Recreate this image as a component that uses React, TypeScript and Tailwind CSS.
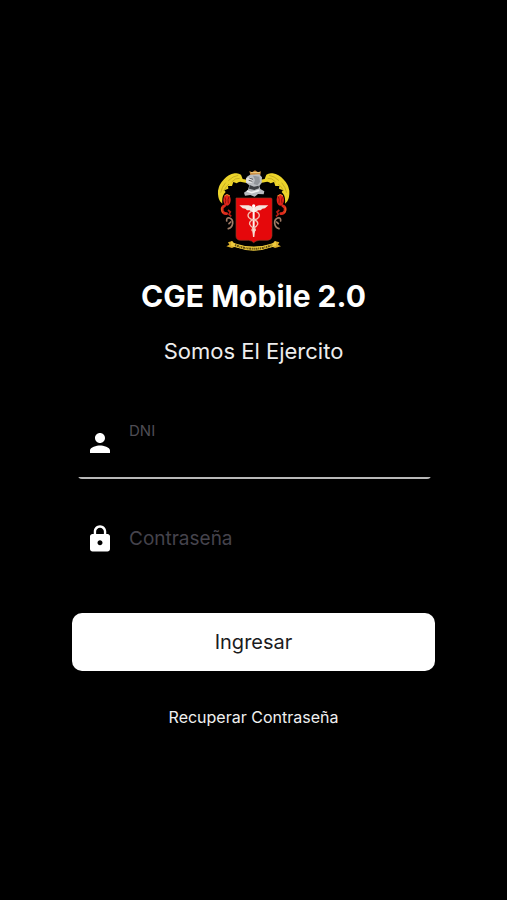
import { useState } from 'react';
import type { ReactNode } from 'react';
import clsx from 'clsx';
import { MdLock, MdPerson } from 'react-icons/md';

interface FieldProps {
  id: string;
  label: string;
  type: string;
  icon: ReactNode;
  value: string;
  active: boolean;
  onChange: (value: string) => void;
  onFocus: () => void;
}

function Field({ id, label, type, icon, value, active, onChange, onFocus }: FieldProps) {
  const floated = active || value !== '';

  return (
    <div className="mr-1 ml-1.5 overflow-hidden rounded-b-sm">
      <div
        className={clsx(
          'relative flex h-[70px] items-center border-b-2 pl-[7px]',
          active ? 'border-[#b8b8b8]' : 'border-transparent'
        )}
      >
        <span className="text-[30px] text-white">{icon}</span>
        <label
          htmlFor={id}
          className={clsx(
            'pointer-events-none absolute left-[51px]',
            floated
              ? 'top-3 text-[15px] leading-5 text-[#4f4d54]'
              : 'inset-y-0 flex items-center text-[19px] text-[#45434c]'
          )}
        >
          {label}
        </label>
        <input
          id={id}
          type={type}
          value={value}
          onChange={(e) => onChange(e.target.value)}
          onFocus={onFocus}
          className="ml-3.5 h-full w-full min-w-0 bg-transparent pt-5 text-xl text-white outline-none"
        />
      </div>
    </div>
  );
}

function Scroll() {
  return (
    <>
      {/* plume */}
      <path
        d="M118 60 L101 57 L96 44 Q88 38 77 40 Q58 43 45 58 Q30 73 27 92 Q26 112 33 124 L40 131 Q38 112 45 102 L50 96 L46 91 L58 86 L57 78 L69 78 L73 66 L83 70 Q90 63 98 66 L113 69 Z"
        fill="#ecd42b"
      />
      <path
        d="M88 46 Q72 48 58 62 M50 68 Q38 82 35 98 M92 55 Q79 53 68 66 M60 72 Q50 80 44 93"
        fill="none"
        stroke="#b59c1c"
        strokeWidth="2"
      />
      {/* ribbon */}
      <ellipse cx="54" cy="120" rx="11" ry="17" fill="#e3241a" />
      <path
        d="M48 112 Q52 120 49 130 M60 110 Q55 118 58 130"
        fill="none"
        stroke="#8b120c"
        strokeWidth="3"
      />
      <path d="M46 108 Q53 99 63 108" fill="none" stroke="#e8932c" strokeWidth="3" />
      <path
        d="M47 137 Q37 141 40 152 Q43 162 53 161"
        fill="none"
        stroke="#dd2a1c"
        strokeWidth="8"
        strokeLinecap="round"
      />
      <path d="M39 142 Q35 150 41 159" fill="none" stroke="#e07a25" strokeWidth="2" />
      <path d="M57 150 L64 156 L60 163 L67 169" fill="none" stroke="#b51d14" strokeWidth="5" />
      <path
        d="M53 183 Q52 171 62 174 Q72 178 71 190 Q69 203 58 206 M65 186 L60 191"
        fill="none"
        stroke="#a07b66"
        strokeWidth="5"
        strokeLinecap="round"
      />
    </>
  );
}

function Crest() {
  return (
    <svg viewBox="0 0 270 300" className="h-[100px] w-[90px]" role="img" aria-label="CGE">
      <Scroll />
      <g transform="translate(268 0) scale(-1 1)">
        <Scroll />
      </g>

      {/* helmet */}
      <path d="M121 33 L129 37 L138 31 L147 37 L156 34 L154 45 L124 45 Z" fill="#c8883a" />
      <path d="M125 38 H153" stroke="#f0d28a" strokeWidth="3" />
      <path
        d="M113 51 L123 44 L151 43 L159 52 L158 69 L151 78 L154 87 L166 94 L164 103 L147 102 L137 110 L124 105 L108 107 L105 98 L117 89 L121 76 L111 68 Z"
        fill="#b9bcc0"
      />
      <path d="M111 55 L124 51 L131 61 L128 69 L112 68 Z" fill="#e3e3e3" />
      <path d="M121 54 L132 58 M119 61 L130 64" stroke="#55575c" strokeWidth="3" />
      <path d="M132 47 L151 50 L153 66 L145 76 L134 72 L138 60 Z" fill="#92969b" />
      <path d="M122 75 L135 80 L149 77 L150 85 L136 90 L120 86 Z" fill="#3c3f43" />
      <path d="M114 93 L128 98 L151 91" fill="none" stroke="#f4f4f4" strokeWidth="5" />

      {/* shield */}
      <path
        d="M81 114 H186 Q189 114 189 118 V228 Q188 240 176 241 H150 Q140 242 134 248 Q129 242 119 241 H94 Q81 240 81 228 Z"
        fill="#e5080b"
        stroke="#8d3b21"
        strokeWidth="2"
      />

      {/* caduceus */}
      <path
        d="M91 136 H119 Q127 137 132 143 L136 143 Q142 137 150 136 H178 L168 145 L160 146 L155 151 L147 151 L141 156 H128 L122 151 L114 151 L109 146 L101 145 Z"
        fill="#f5e6df"
      />
      <circle cx="134" cy="138" r="5" fill="#fff" />
      <path d="M134 140 V217" stroke="#fff4ef" strokeWidth="6" />
      <path d="M129 202 H139 L136 231 H132 Z" fill="#f7ded4" />
      <path
        d="M126 155 Q113 162 119 172 Q124 179 134 179 Q148 183 146 193 Q143 200 134 204 Q127 207 130 213"
        fill="none"
        stroke="#f3c3b4"
        strokeWidth="4"
      />
      <path
        d="M142 155 Q155 162 149 172 Q144 179 134 179 Q120 183 122 193 Q125 200 134 204 Q141 207 138 213"
        fill="none"
        stroke="#f3c3b4"
        strokeWidth="4"
      />

      {/* motto band */}
      <path
        d="M70 243 L57 247 L61 254 L52 259 L69 264 Q77 259 86 263 Q134 277 181 263 Q191 259 198 264 L216 259 L207 254 L211 247 L197 243 Q192 253 178 256 Q134 265 90 256 Q75 253 70 243 Z"
        fill="#d9ae2c"
      />
      <path
        d="M67 243 Q71 249 82 251 Q134 269 186 251 Q196 249 200 243 L202 257 Q193 260 182 263 Q134 281 86 263 Q74 260 66 257 Z"
        fill="#edcb3e"
      />
      <path
        d="M78 255 Q134 278 190 255"
        fill="none"
        stroke="#65500f"
        strokeWidth="6"
        strokeDasharray="4 2 6 2 3 2"
      />
    </svg>
  );
}

export default function App() {
  const [dni, setDni] = useState('');
  const [password, setPassword] = useState('');
  const [active, setActive] = useState('dni');

  return (
    <div className="flex min-h-screen flex-col justify-center bg-black px-[72px] pb-[11px] font-['Inter',sans-serif] text-white">
      <header className="flex flex-col items-center text-center">
        <Crest />
        <h1 className="mt-4 text-3xl leading-10 font-bold">CGE Mobile 2.0</h1>
        <p className="mt-5 text-[22px] leading-[30px] text-[#ededed]">Somos El Ejercito</p>
      </header>

      <form className="mt-[43px] flex flex-col" onSubmit={(e) => e.preventDefault()}>
        <div className="flex flex-col gap-[26px]">
          <Field
            id="dni"
            label="DNI"
            type="text"
            icon={<MdPerson />}
            value={dni}
            active={active === 'dni'}
            onChange={setDni}
            onFocus={() => setActive('dni')}
          />
          <Field
            id="password"
            label="Contraseña"
            type="password"
            icon={<MdLock />}
            value={password}
            active={active === 'password'}
            onChange={setPassword}
            onFocus={() => setActive('password')}
          />
        </div>

        <button type="submit" className="mt-[38px] h-[58px] rounded-[10px] bg-white text-xl text-[#1c1c1e]">
          Ingresar
        </button>
        <a href="#recuperar" className="mt-[34px] self-center text-base leading-6 text-[#f0f0f0]">
          Recuperar Contraseña
        </a>
      </form>
    </div>
  );
}
